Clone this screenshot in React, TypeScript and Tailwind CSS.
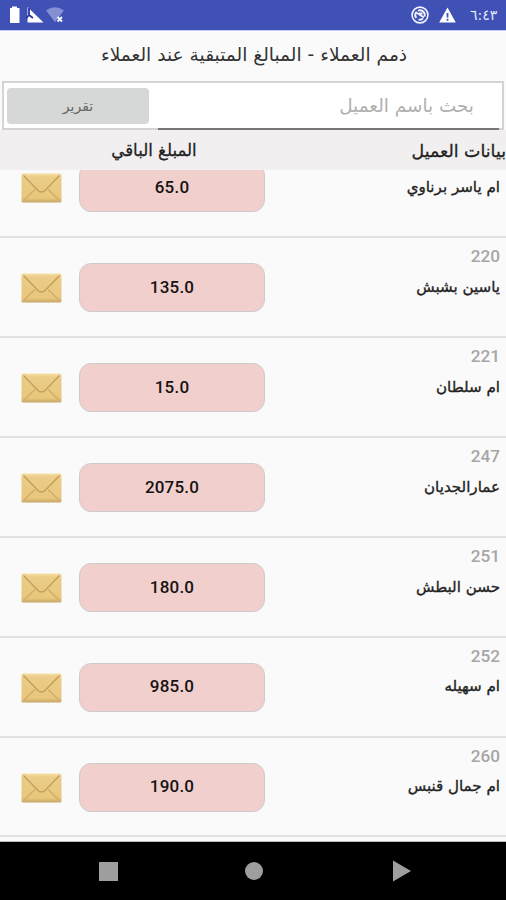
const customers = [
  { id: '', name: 'ام ياسر برناوي', amount: '65.0' },
  { id: '220', name: 'ياسين بشبش', amount: '135.0' },
  { id: '221', name: 'ام سلطان', amount: '15.0' },
  { id: '247', name: 'عمارالجديان', amount: '2075.0' },
  { id: '251', name: 'حسن البطش', amount: '180.0' },
  { id: '252', name: 'ام سهيله', amount: '985.0' },
  { id: '260', name: 'ام جمال قنبس', amount: '190.0' },
];

function Envelope() {
  return (
    <svg width="41" height="30" viewBox="0 0 41 30" className="block">
      <defs>
        <linearGradient id="paper" x1="0" y1="0" x2="0" y2="1">
          <stop offset="0" stopColor="#f6dfa6" />
          <stop offset="0.12" stopColor="#ebcd88" />
          <stop offset="0.85" stopColor="#e8c67c" />
          <stop offset="1" stopColor="#c4a567" />
        </linearGradient>
      </defs>
      <rect x="0.5" y="0.5" width="40" height="29" rx="1.5" fill="url(#paper)" />
      <path d="M3 27 14 16.500M38 27 27 16.500" stroke="#cfac69" strokeWidth="1.2" fill="none" />
      <path d="M2.500 2.500 17 17.500Q18.500 19 20.500 19T24 17.500L38.500 2.500" stroke="#c39f5c" strokeWidth="1.4" fill="none" />
    </svg>
  );
}

function StatusBar() {
  return (
    <div dir="ltr" className="flex h-[30px] items-center justify-between bg-[#3f51b5] pl-[9px] pr-[9px]">
      <svg width="56" height="20" viewBox="0 0 56 20">
        <path d="M3 3V1.500h5V3h2.500v15H1V3z" fill="#fff" />
        <path d="M18.500 2v15.500h16z" fill="#fff" />
        <path d="M20 3v7l-2.500 3M20 10l4 3" stroke="#2a35a0" strokeWidth="1.800" fill="none" />
        <path d="M37 5.500Q46-1 55 5.500L46 17z" fill="#8490d2" />
        <path d="m48.500 12 4.500 4.500m0-4.500-4.500 4.500" stroke="#fff" strokeWidth="1.800" />
      </svg>
      <div className="flex items-center">
        <svg width="18" height="18" viewBox="0 0 18 18" fill="none" stroke="#f3f4ff">
          <circle cx="9" cy="9" r="7.900" strokeWidth="1.600" />
          <path d="M5.300 12A4.700 4.700 0 0 1 5 6.500M7 4.800a4.700 4.700 0 0 1 6.500 5.700M12 12.500a4.700 4.700 0 0 1-4.500 1" strokeWidth="1.800" />
          <path d="m4.500 6 8.500 5.500M8 7.500h3.500" strokeWidth="1.800" />
        </svg>
        <svg width="17" height="16" viewBox="0 0 17 16" className="ml-[10px]">
          <path d="M8.500 0.500 16.800 15.500H0.200z" fill="#fff" />
          <path d="M8.500 6v4.500m0 1.300v2" stroke="#3f51b5" strokeWidth="1.800" />
        </svg>
        <span className="ml-[14px] w-[27px] whitespace-nowrap text-sm leading-none text-[#e6e9fb]">٦:٤٣</span>
      </div>
    </div>
  );
}

function CustomerRow({ id, name, amount }: { id: string; name: string; amount: string }) {
  return (
    <div className="flex h-[99.9px] shrink-0 items-start border-b-2 border-[#e2e2e2] pl-[21px] pr-[6px]">
      <div className="flex-1 pt-[7.3px]">
        <div className="h-[23px] font-[Roboto] text-[17.2px] font-medium leading-[23px] text-[#a6a6a6]">{id}</div>
        <div className="mt-[5.5px] whitespace-nowrap text-[15.1px] leading-[26px] text-[#222] [-webkit-text-stroke:0.35px_#222]">
          {name}
        </div>
      </div>
      <div className="mt-[25px] flex h-[49px] w-[186px] items-center justify-center rounded-xl border border-[#cfcacc] bg-[#f1cfcd] font-[Roboto] text-[17px] font-medium tracking-[0.2px] text-[#161212]">
        {amount}
      </div>
      <div className="mr-[17px] mt-[35px]">
        <Envelope />
      </div>
    </div>
  );
}

export default function App() {
  return (
    <div dir="rtl" className="flex h-[900px] w-[506px] flex-col overflow-hidden bg-[#fafafa] font-['DejaVu_Sans',sans-serif]">
      <StatusBar />

      <h1 className="flex h-[51px] items-center justify-center whitespace-nowrap border-t border-[#c5cbf0] pb-[3px] pl-[2px] text-[18.6px] text-[#333]">
        ذمم العملاء - المبالغ المتبقية عند العملاء
      </h1>

      {/* Search */}
      <div className="mx-[2px] flex h-[49px] border-2 border-[#d4d4d4] bg-white">
        <div className="-mb-[2px] ml-[4px] mr-[3px] flex flex-1 items-center border-b-2 border-[#777] pr-[25px] text-[18.4px] text-[#b0b0b0]">
          بحث باسم العميل
        </div>
        <button className="ml-[3px] mr-[5px] mt-[5px] h-[36px] w-[142px] rounded-sm bg-[#d6d7d7] text-[14px] text-[#666]">
          تقرير
        </button>
      </div>

      {/* Column titles */}
      <div className="flex h-[40px] shrink-0 items-center bg-[#f1eff0] pt-[2px] text-[#1f1f1f] [-webkit-text-stroke:0.3px_#1f1f1f]">
        <div className="flex-1 whitespace-nowrap text-[17.4px]">بيانات العميل</div>
        <div className="ml-[61px] w-[186px] text-center text-[16.6px]">المبلغ الباقي</div>
      </div>

      {/* Customers */}
      <div className="flex h-[672px] shrink-0 flex-col overflow-hidden border-b border-[#bbb]">
        <div className="-mt-[31.8px] flex flex-col">
          {customers.map((customer) => (
            <CustomerRow key={customer.name} {...customer} />
          ))}
        </div>
      </div>

      {/* Navigation bar */}
      <div dir="ltr" className="flex h-[58px] shrink-0 items-center bg-black">
        <div className="ml-[99px] size-[19px] bg-[#9e9e9e]" />
        <div className="ml-[127px] size-[18px] rounded-full bg-[#9e9e9e]" />
        <svg width="18" height="22" viewBox="0 0 18 22" className="ml-[130px]">
          <path d="M0 0.500 18 11 0 21.500z" fill="#9e9e9e" />
        </svg>
      </div>
    </div>
  );
}
